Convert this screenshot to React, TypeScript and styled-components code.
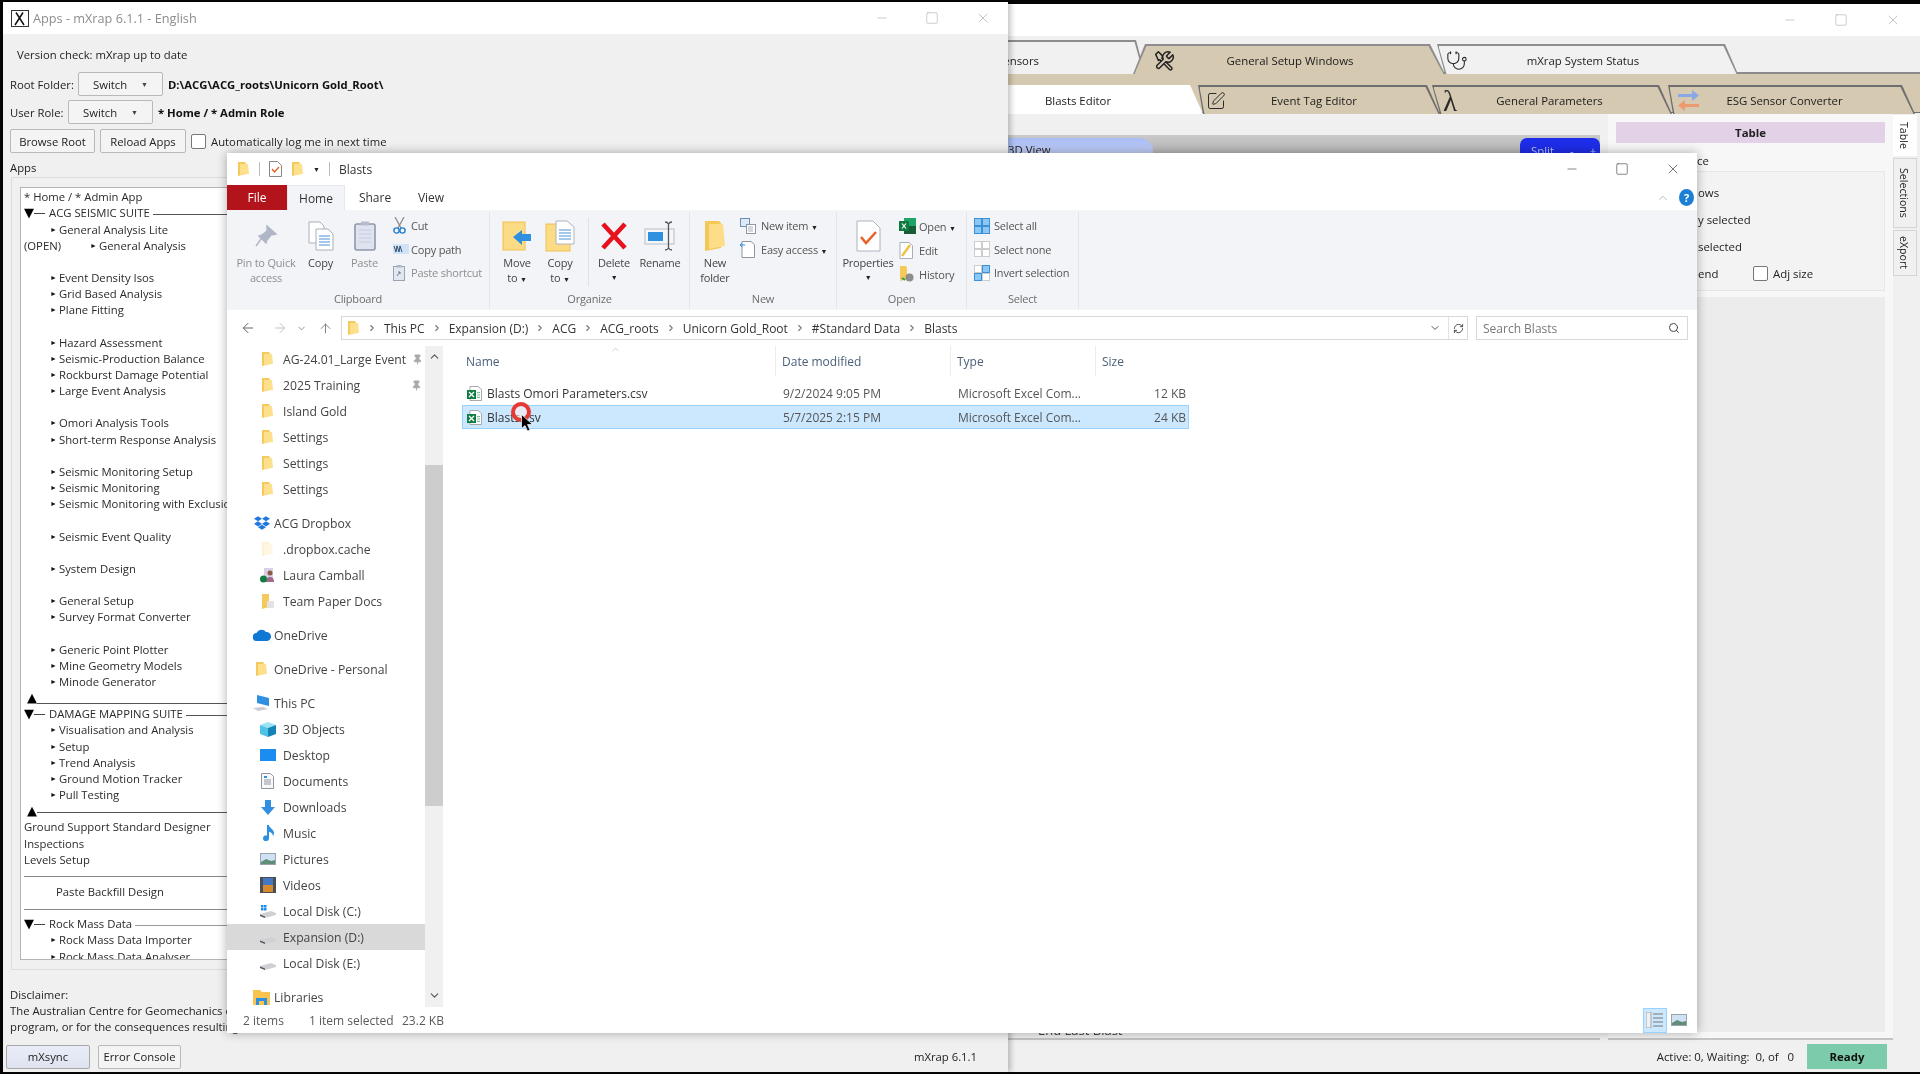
import React, { ReactElement, ReactNode } from 'react'
import styled, { createGlobalStyle } from 'styled-components'
import { FaDropbox } from 'react-icons/fa'
import { ArrowLeft, ArrowRight, ArrowUp, ChevronDown, ChevronRight, ChevronUp, Minus, Pin, RefreshCw, Search, Square, SquarePen, Stethoscope, X } from 'lucide-react'

const GlobalStyle = createGlobalStyle`
  html, body { margin: 0; padding: 0; background: #000; }
  body { font-family: "Open Sans", "Noto Sans", sans-serif; font-size: 11.4px; color: #222; }
  * { box-sizing: border-box; }
`

const Desktop = styled.div`
  position: relative;
  width: 1920px;
  height: 1074px;
  overflow: hidden;
  background: #050505;
  filter: blur(0.3px);
`

const Controls = styled.div<{ $gap: number; $color: string }>`
  display: flex;
  align-items: center;
  gap: ${p => p.$gap}px;
  color: ${p => p.$color};
  margin-left: auto;
`

/* ---------- back window (mXrap main) ---------- */

const BackWindow = styled.section`
  position: absolute;
  left: 1000px;
  top: 4px;
  width: 920px;
  height: 1068px;
  background: #f0f0f0;
  display: flex;
  flex-direction: column;
`

const BackTitle = styled.div`
  height: 32px;
  flex: none;
  background: #fff;
  display: flex;
  align-items: center;
  padding-right: 19px;
`

const TopTabs = styled.div`
  height: 38px;
  flex: none;
  display: flex;
  align-items: flex-end;
  border-bottom: 2px solid #8b8b8b;
`

const SubTabs = styled.div`
  height: 39px;
  flex: none;
  display: flex;
  align-items: flex-end;
  background: #d5c9b1;
  border-bottom: 1px solid #6e6e6e;
`

interface TabShape {
  $w: number
  $h: number
  $tl: number
  $tr: number
  $bl: number
  $fill: string
  $line: string
  $lap: number
  $pl: number
  $pr: number
  $drop?: number
}

const Tab = styled.div<TabShape>`
  position: relative;
  flex: none;
  width: ${p => p.$w}px;
  height: ${p => p.$h}px;
  margin-left: -${p => p.$lap}px;
  margin-bottom: -2px;
  padding: ${p => p.$drop || 0}px ${p => p.$pr}px 0 ${p => p.$pl}px;
  display: flex;
  align-items: center;
  background: ${p => p.$line};
  clip-path: polygon(${p => p.$tl}px 0, calc(100% - ${p => p.$tr}px) 0, 100% 100%, ${p => p.$bl}px 100%);
  &::before {
    content: '';
    position: absolute;
    inset: 2px 1.5px 0 1.5px;
    background: ${p => p.$fill};
    clip-path: polygon(${p => p.$tl}px 0, calc(100% - ${p => p.$tr}px) 0, 100% 100%, ${p => p.$bl}px 100%);
  }
`

const TabIcon = styled.span`
  position: relative;
  display: flex;
  align-items: center;
  flex: none;
  color: #2a2a2a;
`

const TabLabel = styled.span<{ $align?: string }>`
  position: relative;
  flex: 1;
  text-align: ${p => p.$align || 'center'};
  color: #1c1c1c;
  white-space: nowrap;
`

const Lambda = styled.span`
  font-family: "Liberation Serif", serif;
  font-size: 29px;
  line-height: 26px;
`

const BackBody = styled.div`
  flex: 1;
  min-height: 0;
  display: flex;
`

const StagePane = styled.div`
  width: 600px;
  flex: none;
  display: flex;
  flex-direction: column;
  padding-top: 22px;
  border-bottom: 2px solid #c4c4c4;
`

const ViewBar = styled.div`
  height: 40px;
  display: flex;
  align-items: flex-start;
  padding: 3px 0 0;
  background: linear-gradient(#c9c9c9, #9f9f9f);
`

const ViewTab = styled.div`
  width: 153px;
  height: 24px;
  padding: 4px 0 0 8px;
  border-radius: 0 14px 0 0;
  background: linear-gradient(#a9bcf5, #cfdaf8);
`

const SplitButton = styled.div`
  margin-left: auto;
  width: 80px;
  height: 24px;
  border-radius: 7px 7px 0 0;
  background: #1d2de8;
  color: #b9c3f5;
  display: flex;
  align-items: center;
  padding-left: 11px;
  gap: 16px;
`

const StageLegend = styled.div`
  margin-top: auto;
  height: 14px;
  display: flex;
  align-items: center;
  padding-left: 22px;
  gap: 9px;
  font-size: 13px;
  color: #444;
  margin-bottom: 1px;
`

const LegendDot = styled.span`
  width: 7px;
  height: 3px;
  background: #c239b3;
`

const SidePane = styled.div`
  width: 285px;
  flex: none;
  margin-left: 8px;
  background: #f7f7f7;
  border-bottom: 2px solid #c4c4c4;
  padding: 9px 8px 6px 8px;
  display: flex;
  flex-direction: column;
`

const SideHeader = styled.div`
  height: 21px;
  background: #e3d1e8;
  font-weight: 700;
  text-align: center;
  line-height: 21px;
  color: #222;
`

const SideNote = styled.div`
  padding-left: 81px;
  margin-top: 9px;
  height: 19px;
  line-height: 18px;
`

const SideGroup = styled.div`
  height: 120px;
  flex: none;
  margin-left: 4px;
  background: #f3f3f3;
  border: 1px solid #e6e6e6;
  padding: 7px 0 0 77px;
  display: grid;
  grid-auto-rows: 26.9px;
  align-items: center;
`

const SideRow = styled.div`
  display: flex;
  align-items: center;
  gap: 5px;
`

const EndLabel = styled.span`
  width: 50px;
`

const SideFill = styled.div`
  flex: 1;
  margin-top: 6px;
  margin-left: 4px;
  background: #ececec;
`

const SideTabs = styled.div`
  flex: 1;
  padding-top: 2px;
  display: flex;
  flex-direction: column;
  gap: 2px;
`

const SideTab = styled.div<{ $h: number; $on?: boolean }>`
  width: 24px;
  height: ${p => p.$h}px;
  writing-mode: vertical-rl;
  text-align: center;
  line-height: 24px;
  font-size: 10.6px;
  background: ${p => (p.$on ? '#fff' : '#f0f0f0')};
  border: 1px solid ${p => (p.$on ? '#fff' : '#d5d5d5')};
`

const BackFooter = styled.div`
  height: 32px;
  flex: none;
  display: flex;
  align-items: center;
  padding-right: 33px;
`

const StatusText = styled.span`
  margin-left: auto;
  margin-right: 13px;
  white-space: pre;
  color: #222;
`

const ReadyBadge = styled.div`
  width: 80px;
  height: 25px;
  background: #7ccbaa;
  font-weight: 700;
  text-align: center;
  line-height: 25px;
  color: #111;
`

/* ---------- apps window ---------- */

const AppsWindow = styled.section`
  position: absolute;
  left: 3px;
  top: 2px;
  width: 1005px;
  height: 1070px;
  background: #f0f0f0;
  box-shadow: 3px 0 5px rgba(0, 0, 0, 0.22);
  display: flex;
  flex-direction: column;
  font-size: 11.3px;
`

const AppsTitle = styled.div`
  height: 32px;
  flex: none;
  background: #fff;
  display: flex;
  align-items: center;
  padding: 0 17px 0 8px;
  color: #8d8d8d;
  font-size: 12.7px;
  gap: 4px;
`

const AppsBody = styled.div`
  flex: 1;
  padding: 13px 7px 0 7px;
  display: flex;
  flex-direction: column;
  min-height: 0;
`

const VersionLine = styled.div`
  height: 16px;
  line-height: 16px;
  padding-left: 7px;
`

const ToolRow = styled.div<{ $top: number }>`
  margin-top: ${p => p.$top}px;
  display: flex;
  align-items: center;
  gap: 5px;
  white-space: nowrap;
`

const FieldName = styled.span<{ $w: number }>`
  width: ${p => p.$w}px;
  flex: none;
`

const PushButton = styled.div<{ $w: number }>`
  width: ${p => p.$w}px;
  height: 24px;
  flex: none;
  background: #f4f4f4;
  border: 1px solid #b9b9b9;
  border-radius: 2px;
  display: flex;
  align-items: center;
  justify-content: center;
  gap: 14px;
`

const Caret = styled.span`
  font-size: 7px;
  color: #444;
`

const CheckBox = styled.span`
  width: 15px;
  height: 15px;
  flex: none;
  background: #fff;
  border: 1px solid #777;
  border-radius: 2px;
`

const Strong = styled.b`
  font-weight: 700;
  color: #111;
`

const AppsLabel = styled.div`
  margin-top: 7px;
  height: 16px;
  line-height: 16px;
`

const AppsGroup = styled.div`
  margin-top: 1px;
  height: 793px;
  flex: none;
  border: 1px solid #dcdcdc;
  padding: 9px 8px;
  margin-left: 1px;
`

const TreeBox = styled.div`
  height: 773px;
  background: #fff;
  border: 1px solid #b4b4b4;
  padding: 1.2px 3px 0;
  overflow: hidden;
`

const TreeRow = styled.div<{ $indent?: number }>`
  height: 16.17px;
  line-height: 16px;
  white-space: nowrap;
  display: flex;
  align-items: center;
  padding-left: ${p => p.$indent || 0}px;
  color: #2a2a2a;
`

const Bullet = styled.span`
  font-size: 7px;
  width: 9px;
  flex: none;
  color: #111;
`

const OpenTag = styled.span`
  width: 66px;
  flex: none;
`

const Fold = styled.span`
  font-family: "DejaVu Sans", sans-serif;
  font-size: 13px;
  width: 10px;
  flex: none;
  color: #000;
  line-height: 12px;
`

const RuleLine = styled.span<{ $gap?: number; $c?: string; $low?: boolean }>`
  flex: 1;
  height: 1px;
  background: ${p => p.$c || '#555'};
  margin-left: ${p => p.$gap || 0}px;
  transform: translateY(${p => (p.$low ? 5 : 1)}px);
`

const ShortRule = styled.span`
  width: 11px;
  height: 1px;
  margin: 0 4px 0 0;
  background: #444;
  flex: none;
`

const Disclaimer = styled.div`
  margin-top: 17px;
  line-height: 16px;
  white-space: nowrap;
  overflow: hidden;
`

const AppsFooter = styled.div`
  margin-top: 10px;
  display: flex;
  align-items: center;
  gap: 8px;
  height: 23px;
  margin-left: -4px;
  padding-right: 24px;
`

const SyncButton = styled(PushButton)`
  background: linear-gradient(#e9edf8, #dfe3f0);
  border-color: #a9a9a9;
`

const VersionTag = styled.span`
  margin-left: auto;
`

/* ---------- explorer window ---------- */

const Explorer = styled.section`
  position: absolute;
  left: 227px;
  top: 153px;
  width: 1470px;
  height: 880px;
  background: #fff;
  box-shadow: 0 0 10px rgba(0, 0, 0, 0.32);
  display: flex;
  flex-direction: column;
  font-size: 12px;
`

const QuickBar = styled.div`
  height: 32px;
  flex: none;
  display: flex;
  align-items: center;
  padding: 0 16px 0 10px;
  gap: 9px;
  color: #333;
`

const QuickRule = styled.span`
  width: 1px;
  height: 14px;
  background: #bbb;
`

const RibbonTabs = styled.div`
  height: 25px;
  flex: none;
  display: flex;
  align-items: stretch;
  position: relative;
`

const FileTab = styled.div`
  width: 60px;
  background: #b3141b;
  color: #fff;
  text-align: center;
  line-height: 25px;
`

const HomeTab = styled.div`
  width: 58px;
  background: #f2f4f8;
  border: 1px solid #e6e8ec;
  border-bottom: 0;
  text-align: center;
  line-height: 25px;
  color: #333;
`

const PlainTab = styled.div<{ $w: number }>`
  width: ${p => p.$w}px;
  text-align: center;
  line-height: 25px;
  color: #333;
`

const HelpArea = styled.div`
  margin-left: auto;
  display: flex;
  align-items: center;
  gap: 9px;
  padding: 0 3px 0 0;
  color: #8f8f8f;
`

const HelpDot = styled.span`
  width: 15px;
  height: 17px;
  border-radius: 50%;
  background: #1b7fd6;
  color: #fff;
  font-weight: 700;
  font-size: 11px;
  line-height: 17px;
  text-align: center;
`

const Ribbon = styled.div`
  height: 100px;
  flex: none;
  display: flex;
  background: #f2f4f8;
  font-size: 11px;
  letter-spacing: -0.2px;
`

const RibbonGroup = styled.div<{ $w: number }>`
  width: ${p => p.$w}px;
  flex: none;
  display: flex;
  flex-direction: column;
  border-right: 1px solid #e3e5e9;
  margin: 2px 0 1px;
`

const GroupBody = styled.div<{ $pad?: number }>`
  height: 79px;
  display: flex;
  padding-left: ${p => p.$pad || 0}px;
`

const GroupLabel = styled.div`
  height: 16px;
  text-align: center;
  line-height: 16px;
  color: #6d6d6d;
`

const BigButton = styled.div<{ $w: number; $muted?: boolean }>`
  width: ${p => p.$w}px;
  flex: none;
  display: flex;
  flex-direction: column;
  align-items: center;
  text-align: center;
  padding-top: 6px;
  line-height: 15px;
  white-space: nowrap;
  color: ${p => (p.$muted ? '#8e8e8e' : '#444')};
`

const BigIcon = styled.div`
  height: 36px;
  margin-bottom: 1px;
  display: flex;
  align-items: center;
  justify-content: center;
`

const TinyCaret = styled.span`
  font-size: 7px;
  color: #222;
`

const RibbonRule = styled.span`
  width: 1px;
  height: 68px;
  margin: 6px 0 0 12px;
  background: #dfe1e5;
`

const SmallColumn = styled.div<{ $step?: number }>`
  padding-top: 2px;
  display: grid;
  grid-auto-rows: ${p => p.$step || 23.5}px;
`

const SmallRow = styled.div<{ $slot: number; $muted?: boolean }>`
  display: grid;
  grid-template-columns: ${p => p.$slot}px auto;
  align-items: center;
  white-space: nowrap;
  color: ${p => (p.$muted ? '#8e8e8e' : '#555')};
`

const AddressRow = styled.div`
  height: 36px;
  flex: none;
  display: flex;
  align-items: center;
  padding: 0 9px 0 13px;
  color: #888;
`

const NavArrow = styled.span<{ $w: number; $c?: string }>`
  width: ${p => p.$w}px;
  display: flex;
  color: ${p => p.$c || '#666'};
`

const AddressBox = styled.div`
  width: 1127px;
  height: 24px;
  margin-left: 3px;
  border: 1px solid #d9d9d9;
  display: flex;
  align-items: center;
  padding-left: 5px;
  gap: 7px;
  color: #333;
  white-space: nowrap;
`

const Crumb = styled.span`
  display: flex;
  color: #777;
`

const AddressEnd = styled.span`
  margin-left: auto;
  display: flex;
  height: 100%;
  align-items: center;
  gap: 4px;
`

const AddressDrop = styled.span`
  width: 18px;
  height: 100%;
  display: flex;
  align-items: center;
  justify-content: center;
  color: #555;
`

const RefreshSlot = styled.span`
  width: 19px;
  height: 100%;
  display: flex;
  align-items: center;
  justify-content: center;
  border-left: 1px solid #e2e2e2;
  color: #444;
`

const SearchBox = styled.div`
  width: 212px;
  height: 24px;
  margin-left: 8px;
  border: 1px solid #d9d9d9;
  display: flex;
  align-items: center;
  padding: 0 7px 0 6px;
  color: #777;
  justify-content: space-between;
`

const MainSplit = styled.div`
  flex: 1;
  min-height: 0;
  display: flex;
`

const NavPane = styled.div`
  width: 198px;
  flex: none;
  overflow: hidden;
`

const NavRow = styled.div<{ $top?: boolean; $on?: boolean }>`
  height: 26px;
  margin-top: ${p => (p.$top ? 8 : 0)}px;
  padding-left: ${p => (p.$top ? 25 : 31)}px;
  display: flex;
  align-items: center;
  gap: ${p => (p.$top ? 3 : 6)}px;
  white-space: nowrap;
  color: #444;
  background: ${p => (p.$on ? '#d9d9d9' : 'transparent')};
  font-size: 12.2px;
`

const NavIcon = styled.span`
  width: 19px;
  height: 19px;
  flex: none;
  display: flex;
  align-items: center;
  justify-content: center;
`

const PinMark = styled.span`
  margin-left: auto;
  padding-right: 3px;
  color: #a9a9a9;
  display: flex;
`

const ScrollTrack = styled.div`
  width: 18px;
  flex: none;
  background: #f0f0f0;
  display: flex;
  flex-direction: column;
  align-items: center;
  color: #555;
  padding: 4px 0 1px;
`

const ScrollThumb = styled.div`
  width: 100%;
  height: 341px;
  margin-top: 102px;
  background: #cdcdcd;
`

const ScrollDown = styled.span`
  margin-top: auto;
`

const FilePane = styled.div`
  flex: 1;
  padding-left: 19px;
  position: relative;
`

const FileGrid = styled.div<{ $h: number; $on?: boolean }>`
  width: 727px;
  height: ${p => p.$h}px;
  display: grid;
  grid-template-columns: 320px 175px 145px 87px;
  align-items: center;
  background: ${p => (p.$on ? '#cce8ff' : 'transparent')};
  border: 1px solid ${p => (p.$on ? '#99d1ff' : 'transparent')};
  color: #555;
  white-space: nowrap;
`

const HeadGrid = styled(FileGrid)`
  border: 0;
  color: #4c607a;
  margin-bottom: 6px;
`

const HeadCell = styled.div<{ $pad?: number }>`
  height: 100%;
  padding-left: ${p => p.$pad || 0}px;
  display: flex;
  align-items: center;
  position: relative;
  &::before {
    content: '';
    position: absolute;
    left: -7px;
    top: 0;
    bottom: 0;
    width: 1px;
    background: ${p => (p.$pad ? 'transparent' : '#ececec')};
  }
`

const SortMark = styled.span`
  position: absolute;
  left: 148px;
  top: -2px;
  color: #999;
  display: flex;
`

const NameCell = styled.div`
  display: flex;
  align-items: center;
  gap: 5px;
  padding-left: 4px;
  color: #333;
`

const SizeCell = styled.div`
  text-align: right;
  padding-right: 4px;
`

const StatusBar = styled.div`
  height: 26px;
  flex: none;
  display: flex;
  align-items: center;
  padding: 0 9px 0 16px;
  color: #5a5a5a;
  white-space: nowrap;
`

const StatusItem = styled.span<{ $w: number }>`
  width: ${p => p.$w}px;
`

const ViewSwitch = styled.div<{ $on?: boolean }>`
  width: ${p => (p.$on ? 24 : 18)}px;
  height: 25px;
  margin-left: ${p => (p.$on ? 'auto' : '3px')};
  background: ${p => (p.$on ? '#cce8ff' : 'transparent')};
  border: 1px solid ${p => (p.$on ? '#99d1ff' : 'transparent')};
  display: flex;
  align-items: center;
  justify-content: center;
`

const ClickRing = styled.span`
  position: absolute;
  left: 68px;
  top: 56px;
  width: 20px;
  height: 20px;
  border-radius: 50%;
  border: 4px solid #e43a33;
  background: rgba(255, 235, 235, 0.55);
  filter: blur(0.6px);
`

const Pointer = styled.svg`
  position: absolute;
  left: 78px;
  top: 68px;
`

/* ---------- drawings ---------- */

const Folder = ({ faded }: { faded?: boolean }): ReactElement => (
  <svg width="13" height="16" viewBox="0 0 13 16">
    <path d="M1 1h7l1 1.5V13l-8 2z" fill={faded ? '#fdf2d2' : '#f6c95d'} />
    <path d="M3 3h8l1 10-9 1z" fill={faded ? '#fff7e2' : '#fddf8c'} />
  </svg>
)

const BigFolder = (): ReactElement => (
  <svg width="22" height="32" viewBox="0 0 22 32">
    <path d="M1 1h14l2 2v25L1 31z" fill="#f5c757" />
    <path d="M5 4h14l2 22-16 3z" fill="#fddd88" />
  </svg>
)

const ExcelFile = (): ReactElement => (
  <svg width="15" height="15" viewBox="0 0 15 15">
    <path d="M3 .5h8l3.500 3v11H3z" fill="#fff" stroke="#a9a9a9" />
    <path d="M10 6h3v1.2h-3zm0 2.4h3v1.2h-3zm0 2.4h3V12h-3z" fill="#7fbf9f" />
    <rect y="4" width="9" height="9" fill="#107c41" />
    <path d="M2 6l5 5M7 6l-5 5" stroke="#fff" strokeWidth="1.3" />
  </svg>
)

const PageLines = ({ w, h }: { w: number; h: number }): ReactElement => (
  <svg width={w} height={h} viewBox="0 0 26 30">
    <path d="M1 1h11l4 4v17H1z" fill="#fff" stroke="#a9aeb8" />
    <path d="M8 8h12l5 5v16H8z" fill="#fff" stroke="#a9aeb8" />
    <path d="M11 15h11M11 18h11M11 21h11M11 24h11" stroke="#4a90d9" strokeWidth="1.2" />
  </svg>
)

const Clipboard = (): ReactElement => (
  <svg width="22" height="30" viewBox="0 0 22 30">
    <rect x="1" y="3" width="20" height="26" rx="2" fill="#dfe3ef" stroke="#8f97ad" strokeWidth="1.6" />
    <rect x="7" y="0.5" width="8" height="4" fill="#b6bccb" />
    <path d="M5 9h12M5 13h12M5 17h12M5 21h12" stroke="#c7cde0" />
  </svg>
)

const QuickPin = (): ReactElement => (
  <svg width="24" height="24" viewBox="0 0 24 24">
    <path d="M13 2l9 8-5 1-4 5-1 3-7-7 3-1 5-4z M7 15l-5 7" fill="#b0b6c6" stroke="#b0b6c6" strokeWidth="1.4" />
  </svg>
)

const Scissors = (): ReactElement => (
  <svg width="13" height="17" viewBox="0 0 13 17">
    <path d="M2 0l6 11M11 0L5 11" stroke="#8b8b8b" strokeWidth="1.3" />
    <circle cx="3.5" cy="13.5" r="2.6" fill="none" stroke="#1f7fd0" strokeWidth="1.4" />
    <circle cx="9.5" cy="13.5" r="2.6" fill="none" stroke="#1f7fd0" strokeWidth="1.4" />
  </svg>
)

const PathBadge = (): ReactElement => (
  <svg width="16" height="10" viewBox="0 0 16 10">
    <rect width="16" height="10" fill="#cfe2f6" />
    <path d="M1 2l2 6 1-6 2 6 1-6 2 6" stroke="#22405f" fill="none" strokeWidth="0.9" />
  </svg>
)

const ShortcutDoc = (): ReactElement => (
  <svg width="12" height="16" viewBox="0 0 12 16">
    <rect x="0.5" y="1.5" width="11" height="14" fill="#e3e7f0" stroke="#9aa2b5" />
    <rect x="3.5" y="0" width="5" height="2.5" fill="#b0b6c6" />
    <path d="M4 11l3-4m-2 0h2v2" stroke="#6a7a95" fill="none" />
  </svg>
)

const MoveArrow = (): ReactElement => (
  <svg width="30" height="30" viewBox="0 0 30 30">
    <rect x="1" y="1" width="22" height="28" fill="#fcdb85" stroke="#f0c050" />
    <path d="M11 16l9-7v4h9v7h-9v4z" fill="#2f8fe0" />
  </svg>
)

const CopyFolder = (): ReactElement => (
  <svg width="30" height="32" viewBox="0 0 30 32">
    <rect x="1" y="4" width="24" height="27" fill="#fcdb85" stroke="#f0c050" />
    <path d="M11 1h11l7 6v17H11z" fill="#fff" stroke="#b0b5c0" />
    <path d="M14 10h12M14 13h12M14 16h12M14 19h12" stroke="#4a90d9" />
  </svg>
)

const RedCross = (): ReactElement => (
  <svg width="28" height="28" viewBox="0 0 28 28">
    <path d="M3 2l22 24M25 2L3 26" stroke="#e8121c" strokeWidth="4.6" />
  </svg>
)

const RenameMark = (): ReactElement => (
  <svg width="32" height="30" viewBox="0 0 32 30">
    <rect x="1" y="8" width="29" height="15" fill="#f4f6fa" stroke="#b8bcc6" />
    <rect x="4" y="11" width="15" height="9" fill="#2f8fe0" />
    <path d="M21 1c2 0 3 1 3.500 2C25 2 26 1 28 1M24.500 3v24M21 29c2 0 3-1 3.500-2 .5 1 1.500 2 3.500 2" stroke="#55585f" fill="none" strokeWidth="1.3" />
  </svg>
)

const NewItem = (): ReactElement => (
  <svg width="16" height="16" viewBox="0 0 16 16">
    <rect x="0.5" y="0.5" width="9" height="8" fill="#dbe9f8" stroke="#6f8db0" />
    <rect x="6.5" y="6.5" width="9" height="9" fill="#fff" stroke="#8f96a3" />
    <path d="M8 9h5M8 11h5M8 13h5" stroke="#aab0bb" />
  </svg>
)

const EasyAccess = (): ReactElement => (
  <svg width="15" height="17" viewBox="0 0 15 17">
    <path d="M2 .5h9l3.500 3v13H2z" fill="#fff" stroke="#8f96a3" />
    <path d="M0 4h5M2 2l-2 2 2 2" stroke="#2f8fe0" fill="none" />
  </svg>
)

const Properties = (): ReactElement => (
  <svg width="25" height="32" viewBox="0 0 25 32">
    <path d="M1 1h16l7 7v23H1z" fill="#fff" stroke="#aeb2ba" />
    <path d="M5 17l5 6 10-11" stroke="#e8622a" fill="none" strokeWidth="2.6" />
  </svg>
)

const ExcelApp = (): ReactElement => (
  <svg width="17" height="16" viewBox="0 0 17 16">
    <rect x="5" width="12" height="16" fill="#21a366" />
    <rect x="5" y="8" width="12" height="8" fill="#185c37" />
    <rect y="3" width="10" height="10" fill="#0f7b41" />
    <path d="M3 5.5l4 5M7 5.5l-4 5" stroke="#fff" strokeWidth="1.2" />
  </svg>
)

const EditPage = (): ReactElement => (
  <svg width="15" height="17" viewBox="0 0 15 17">
    <path d="M1 .5h9l3.500 3v13H1z" fill="#fff" stroke="#a9aeb8" />
    <path d="M3 14L11 3" stroke="#f0c040" strokeWidth="2.4" />
  </svg>
)

const HistoryFolder = (): ReactElement => (
  <svg width="15" height="16" viewBox="0 0 15 16">
    <path d="M1 0h6l1 1.500V13l-7 2z" fill="#f6c95d" />
    <circle cx="10.5" cy="11.5" r="4" fill="#8d8d8d" />
    <path d="M3 12l3 2" stroke="#3a9a4a" strokeWidth="2" />
  </svg>
)

const Tiles = ({ cells, line }: { cells: boolean[]; line: string }): ReactElement => (
  <svg width="16" height="16" viewBox="0 0 16 16">
    {cells.map((on, i) => (
      <rect
        key={i}
        x={0.5 + (i % 2) * 8}
        y={0.5 + Math.floor(i / 2) * 8}
        width="7"
        height="7"
        fill={on ? '#8cc8f5' : '#fff'}
        stroke={on ? '#3d8fd6' : line}
      />
    ))}
  </svg>
)

const Doc = (): ReactElement => (
  <svg width="13" height="16" viewBox="0 0 13 16">
    <path d="M.5.5h9l3 3v12H.5z" fill="#f8f8f8" stroke="#8f96a3" />
    <path d="M3 7h7M3 9h7M3 11h7" stroke="#8f96a3" />
    <path d="M3 3h3v2H3z" fill="#2f8fe0" />
  </svg>
)

const Monitor = (): ReactElement => (
  <svg width="17" height="16" viewBox="0 0 17 16">
    <path d="M4 0l12 3v8L4 8z" fill="#2f8fe0" />
    <path d="M0 13l10-1 5 2-10 2z" fill="#c8ccd2" />
  </svg>
)

const Cube = (): ReactElement => (
  <svg width="16" height="15" viewBox="0 0 16 15">
    <path d="M8 0l8 3-8 3-8-3z" fill="#9be3f3" />
    <path d="M0 3l8 3v9l-8-3z" fill="#4fc3e6" />
    <path d="M16 3L8 6v9l8-3z" fill="#1483b8" />
  </svg>
)

const DesktopIcon = (): ReactElement => (
  <svg width="16" height="12" viewBox="0 0 16 12">
    <rect width="16" height="12" fill="#1b8df0" />
  </svg>
)

const DownArrow = (): ReactElement => (
  <svg width="14" height="15" viewBox="0 0 14 15">
    <path d="M4 0h6v7h4l-7 8-7-8h4z" fill="#2f8fe0" />
  </svg>
)

const Note = (): ReactElement => (
  <svg width="12" height="16" viewBox="0 0 12 16">
    <path d="M5 0h2c0 3 5 4 5 8 0 2-1 3-1 3 0-2-2-4-4-4v6a3 3 0 1 1-2-2.500z" fill="#2f8fe0" />
  </svg>
)

const Picture = (): ReactElement => (
  <svg width="16" height="12" viewBox="0 0 16 12">
    <rect x="0.5" y="0.5" width="15" height="11" fill="#cfe2f3" stroke="#9ba3ad" />
    <path d="M1 9l5-3 5 2 4-1v4H1z" fill="#5f8d7a" />
  </svg>
)

const Film = (): ReactElement => (
  <svg width="16" height="16" viewBox="0 0 16 16">
    <rect width="16" height="16" fill="#4a4f55" />
    <rect x="3" y="1" width="10" height="7" fill="#4477c4" />
    <rect x="3" y="8" width="10" height="7" fill="#d68a2c" />
  </svg>
)

const Disk = ({ win }: { win?: boolean }): ReactElement => (
  <svg width="16" height="14" viewBox="0 0 16 14">
    <path d="M0 10l11-3 5 2v2L5 14l-5-2z" fill="#cfd1d4" />
    <path d="M0 10.5l5 2V14l-5-2z" fill="#555" />
    {win && <path d="M1 1h2.500v2.500H1zm3 0h2.500v2.500H4zM1 4h2.500v2.500H1zm3 0h2.500v2.500H4z" fill="#1b8df0" />}
  </svg>
)

const LibraryIcon = (): ReactElement => (
  <svg width="17" height="15" viewBox="0 0 17 15">
    <path d="M0 0h7l2 2h8v13H0z" fill="#f8c34e" />
    <rect x="3" y="8" width="11" height="7" fill="#2f8fe0" />
    <rect x="6" y="11" width="5" height="4" fill="#f8c34e" />
  </svg>
)

const SmallCloud = (): ReactElement => (
  <svg width="18" height="12" viewBox="0 0 18 12">
    <path d="M4 12a4 4 0 0 1-.5-8A5.500 5.500 0 0 1 13 3a4.500 4.500 0 0 1 1 9z" fill="#0f78d4" />
  </svg>
)

const PersonFolder = (): ReactElement => (
  <svg width="16" height="15" viewBox="0 0 16 15">
    <rect x="4" width="9" height="12" fill="#d9cfe8" />
    <circle cx="10" cy="5" r="2.5" fill="#8a5a44" />
    <path d="M6 14c0-4 2-5 4-5s4 1 4 5z" fill="#a06a8c" />
    <circle cx="3.5" cy="11" r="3.5" fill="#107c41" />
  </svg>
)

const TeamFolder = (): ReactElement => (
  <svg width="14" height="16" viewBox="0 0 14 16">
    <path d="M1 1h7v13l-7 2z" fill="#f6c95d" />
    <rect x="6" y="8" width="7" height="7" fill="#e3e3e3" />
  </svg>
)

const AppLogo = (): ReactElement => (
  <svg width="18" height="17" viewBox="0 0 18 17">
    <rect x="0.5" y="0.5" width="17" height="16" fill="#fff" stroke="#333" />
    <path d="M5 2.500l8 12.500M12 2.500L4 15" stroke="#111" strokeWidth="1.5" />
  </svg>
)

const Tools = (): ReactElement => (
  <svg width="21" height="21" viewBox="0 0 24 24" fill="#d5c9b1" stroke="#222" strokeWidth="1.7" strokeLinejoin="round">
    <path d="M2 5l3-3 5 5-1 2 11 11c.8.8.8 1.600 0 2.300-.7.7-1.500.7-2.300 0L6.800 11.200 5 12z" />
    <path d="M14.700 6.300a1 1 0 0 0 0 1.400l1.600 1.600a1 1 0 0 0 1.400 0l3.770-3.770a6 6 0 0 1-7.940 7.940l-6.910 6.910a2.120 2.120 0 0 1-3-3l6.910-6.910a6 6 0 0 1 7.940-7.940l-3.760 3.760z" />
  </svg>
)

const SwapArrows = (): ReactElement => (
  <svg width="21" height="21" viewBox="0 0 21 21">
    <path d="M0 4h14V0l7 5.500-7 5.500V7H0z" fill="#8aa8e8" />
    <path d="M21 14H7v-4L0 15.500 7 21v-4h14z" fill="#ec9a70" />
  </svg>
)

const DetailsView = (): ReactElement => (
  <svg width="18" height="16" viewBox="0 0 18 16">
    <path d="M0 0h5v16H0z" fill="#f0f0f0" stroke="#777" strokeWidth="0.6" />
    <path d="M7 2h10M7 6h10M7 10h10M7 14h10" stroke="#777" />
  </svg>
)

/* ---------- data ---------- */

type TreeEntry =
  | { kind: 'text'; label: string; indent?: number }
  | { kind: 'item'; label: string }
  | { kind: 'open'; label: string }
  | { kind: 'gap' }
  | { kind: 'suite'; label: string; line?: string }
  | { kind: 'end'; low?: boolean }
  | { kind: 'rule' }

const item = (label: string): TreeEntry => ({ kind: 'item', label })
const gap: TreeEntry = { kind: 'gap' }

const tree: TreeEntry[] = [
  { kind: 'text', label: '* Home / * Admin App' },
  { kind: 'suite', label: 'ACG SEISMIC SUITE' },
  item('General Analysis Lite'),
  { kind: 'open', label: 'General Analysis' },
  gap,
  item('Event Density Isos'),
  item('Grid Based Analysis'),
  item('Plane Fitting'),
  gap,
  item('Hazard Assessment'),
  item('Seismic-Production Balance'),
  item('Rockburst Damage Potential'),
  item('Large Event Analysis'),
  gap,
  item('Omori Analysis Tools'),
  item('Short-term Response Analysis'),
  gap,
  item('Seismic Monitoring Setup'),
  item('Seismic Monitoring'),
  item('Seismic Monitoring with Exclusions'),
  gap,
  item('Seismic Event Quality'),
  gap,
  item('System Design'),
  gap,
  item('General Setup'),
  item('Survey Format Converter'),
  gap,
  item('Generic Point Plotter'),
  item('Mine Geometry Models'),
  item('Minode Generator'),
  { kind: 'end', low: true },
  { kind: 'suite', label: 'DAMAGE MAPPING SUITE' },
  item('Visualisation and Analysis'),
  item('Setup'),
  item('Trend Analysis'),
  item('Ground Motion Tracker'),
  item('Pull Testing'),
  { kind: 'end' },
  { kind: 'text', label: 'Ground Support Standard Designer' },
  { kind: 'text', label: 'Inspections' },
  { kind: 'text', label: 'Levels Setup' },
  { kind: 'rule' },
  { kind: 'text', label: 'Paste Backfill Design', indent: 32 },
  { kind: 'rule' },
  { kind: 'suite', label: 'Rock Mass Data', line: '#999' },
  item('Rock Mass Data Importer'),
  item('Rock Mass Data Analyser'),
]

interface NavEntry {
  label: string
  icon: ReactNode
  top?: boolean
  on?: boolean
  pinned?: boolean
}

const navEntries: NavEntry[] = [
  { label: 'AG-24.01_Large Event', icon: <Folder />, pinned: true },
  { label: '2025 Training', icon: <Folder />, pinned: true },
  { label: 'Island Gold', icon: <Folder /> },
  { label: 'Settings', icon: <Folder /> },
  { label: 'Settings', icon: <Folder /> },
  { label: 'Settings', icon: <Folder /> },
  { label: 'ACG Dropbox', icon: <FaDropbox size={16} color="#1f78e0" />, top: true },
  { label: '.dropbox.cache', icon: <Folder faded /> },
  { label: 'Laura Camball', icon: <PersonFolder /> },
  { label: 'Team Paper Docs', icon: <TeamFolder /> },
  { label: 'OneDrive', icon: <SmallCloud />, top: true },
  { label: 'OneDrive - Personal', icon: <Folder />, top: true },
  { label: 'This PC', icon: <Monitor />, top: true },
  { label: '3D Objects', icon: <Cube /> },
  { label: 'Desktop', icon: <DesktopIcon /> },
  { label: 'Documents', icon: <Doc /> },
  { label: 'Downloads', icon: <DownArrow /> },
  { label: 'Music', icon: <Note /> },
  { label: 'Pictures', icon: <Picture /> },
  { label: 'Videos', icon: <Film /> },
  { label: 'Local Disk (C:)', icon: <Disk win /> },
  { label: 'Expansion (D:)', icon: <Disk />, on: true },
  { label: 'Local Disk (E:)', icon: <Disk /> },
  { label: 'Libraries', icon: <LibraryIcon />, top: true },
]

const crumbs = ['This PC', 'Expansion (D:)', 'ACG', 'ACG_roots', 'Unicorn Gold_Root', '#Standard Data', 'Blasts']

const renderTree = (entry: TreeEntry, i: number): ReactElement => {
  switch (entry.kind) {
    case 'text':
      return <TreeRow key={i} $indent={entry.indent}>{entry.label}</TreeRow>
    case 'item':
      return <TreeRow key={i} $indent={26}><Bullet>►</Bullet>{entry.label}</TreeRow>
    case 'open':
      return (
        <TreeRow key={i}>
          <OpenTag>(OPEN)</OpenTag>
          <Bullet>►</Bullet>
          {entry.label}
        </TreeRow>
      )
    case 'gap':
      return <TreeRow key={i} />
    case 'suite':
      return (
        <TreeRow key={i}>
          <Fold>▼</Fold>
          <ShortRule />
          {entry.label}
          <RuleLine $gap={3} $c={entry.line} />
        </TreeRow>
      )
    case 'end':
      return (
        <TreeRow key={i} $indent={3}>
          <Fold>▲</Fold>
          <RuleLine $low={entry.low} />
        </TreeRow>
      )
    default:
      return <TreeRow key={i}><RuleLine $c="#888" /></TreeRow>
  }
}

const WindowButtons = ({ color, gap: space, size }: { color: string; gap: number; size: number }): ReactElement => (
  <Controls $gap={space} $color={color}>
    <Minus size={size} strokeWidth={1} />
    <Square size={size} strokeWidth={1} />
    <X size={size + 2} strokeWidth={1} />
  </Controls>
)

const BackMxrap = (): ReactElement => (
  <BackWindow>
    <BackTitle>
      <WindowButtons color="#a8a8a8" gap={37} size={14} />
    </BackTitle>
    <TopTabs>
      <Tab $w={145} $h={34} $tl={0} $tr={9} $bl={0} $fill="#f1f1f1" $line="#8d8d8d" $lap={0} $pl={0} $pr={106} $drop={6}>
        <TabLabel $align="right">ensors</TabLabel>
      </Tab>
      <Tab $w={312} $h={30} $tl={12} $tr={15} $bl={0} $fill="#d5c9b1" $line="#8d8d8d" $lap={12} $pl={21} $pr={40} $drop={3}>
        <TabIcon><Tools /></TabIcon>
        <TabLabel>General Setup Windows</TabLabel>
      </Tab>
      <Tab $w={301} $h={30} $tl={0} $tr={13} $bl={8} $fill="#f1f1f1" $line="#8d8d8d" $lap={8} $pl={9} $pr={40} $drop={3}>
        <TabIcon><Stethoscope size={22} strokeWidth={1.2} /></TabIcon>
        <TabLabel>mXrap System Status</TabLabel>
      </Tab>
    </TopTabs>
    <SubTabs>
      <Tab $w={203} $h={29} $tl={0} $tr={13} $bl={0} $fill="#fff" $line="#fff" $lap={0} $pl={0} $pr={47} $drop={2}>
        <TabLabel>Blasts Editor</TabLabel>
      </Tab>
      <Tab $w={242} $h={29} $tl={0} $tr={13} $bl={5} $fill="#d5c9b1" $line="#6e6e6e" $lap={5} $pl={8} $pr={38} $drop={2}>
        <TabIcon><SquarePen size={20} strokeWidth={1.2} /></TabIcon>
        <TabLabel>Event Tag Editor</TabLabel>
      </Tab>
      <Tab $w={240} $h={29} $tl={0} $tr={13} $bl={8} $fill="#d5c9b1" $line="#6e6e6e" $lap={8} $pl={11} $pr={30} $drop={2}>
        <TabIcon><Lambda>λ</Lambda></TabIcon>
        <TabLabel>General Parameters</TabLabel>
      </Tab>
      <Tab $w={247} $h={29} $tl={0} $tr={13} $bl={5} $fill="#d5c9b1" $line="#6e6e6e" $lap={4} $pl={10} $pr={45} $drop={2}>
        <TabIcon><SwapArrows /></TabIcon>
        <TabLabel>ESG Sensor Converter</TabLabel>
      </Tab>
    </SubTabs>
    <BackBody>
      <StagePane>
        <ViewBar>
          <ViewTab>3D View</ViewTab>
          <SplitButton><span>Split</span><span>-</span><span>+</span></SplitButton>
        </ViewBar>
        <StageLegend><LegendDot />End Last Blast</StageLegend>
      </StagePane>
      <SidePane>
        <SideHeader>Table</SideHeader>
        <SideNote>ce</SideNote>
        <SideGroup>
          <SideRow>ows</SideRow>
          <SideRow>y selected</SideRow>
          <SideRow>selected</SideRow>
          <SideRow>
            <EndLabel>end</EndLabel>
            <CheckBox />
            Adj size
          </SideRow>
        </SideGroup>
        <SideFill />
      </SidePane>
      <SideTabs>
        <SideTab $h={41} $on>Table</SideTab>
        <SideTab $h={70}>Selections</SideTab>
        <SideTab $h={46}>eXport</SideTab>
      </SideTabs>
    </BackBody>
    <BackFooter>
      <StatusText>Active: 0, Waiting:  0, of   0</StatusText>
      <ReadyBadge>Ready</ReadyBadge>
    </BackFooter>
  </BackWindow>
)

const AppsPanel = (): ReactElement => (
  <AppsWindow>
    <AppsTitle>
      <AppLogo />
      Apps - mXrap 6.1.1 - English
      <WindowButtons color="#a8a8a8" gap={36} size={14} />
    </AppsTitle>
    <AppsBody>
      <VersionLine>Version check: mXrap up to date</VersionLine>
      <ToolRow $top={9}>
        <FieldName $w={63}>Root Folder:</FieldName>
        <PushButton $w={85}>Switch <Caret>▼</Caret></PushButton>
        <Strong>D:\ACG\ACG_roots\Unicorn Gold_Root\</Strong>
      </ToolRow>
      <ToolRow $top={4}>
        <FieldName $w={53}>User Role:</FieldName>
        <PushButton $w={85}>Switch <Caret>▼</Caret></PushButton>
        <Strong>* Home / * Admin Role</Strong>
      </ToolRow>
      <ToolRow $top={5}>
        <PushButton $w={85}>Browse Root</PushButton>
        <PushButton $w={86}>Reload Apps</PushButton>
        <CheckBox />
        Automatically log me in next time
      </ToolRow>
      <AppsLabel>Apps</AppsLabel>
      <AppsGroup>
        <TreeBox>{tree.map(renderTree)}</TreeBox>
      </AppsGroup>
      <Disclaimer>
        Disclaimer:
        <br />
        The Australian Centre for Geomechanics c
        <br />
        program, or for the consequences resulting
      </Disclaimer>
      <AppsFooter>
        <SyncButton $w={84}>mXsync</SyncButton>
        <PushButton $w={83}>Error Console</PushButton>
        <VersionTag>mXrap 6.1.1</VersionTag>
      </AppsFooter>
    </AppsBody>
  </AppsWindow>
)

const ExplorerWindow = (): ReactElement => (
  <Explorer>
    <QuickBar>
      <Folder />
      <QuickRule />
      <svg width="13" height="16" viewBox="0 0 13 16">
        <path d="M.5.5h8l4 4v11H.5z" fill="#fff" stroke="#888" />
        <path d="M3 8l2.500 3L10 6" stroke="#e8622a" fill="none" strokeWidth="1.4" />
      </svg>
      <Folder />
      <TinyCaret>▼</TinyCaret>
      <QuickRule />
      Blasts
      <WindowButtons color="#333" gap={36} size={14} />
    </QuickBar>
    <RibbonTabs>
      <FileTab>File</FileTab>
      <HomeTab>Home</HomeTab>
      <PlainTab $w={60}>Share</PlainTab>
      <PlainTab $w={52}>View</PlainTab>
      <HelpArea>
        <ChevronUp size={14} strokeWidth={1} />
        <HelpDot>?</HelpDot>
      </HelpArea>
    </RibbonTabs>
    <Ribbon>
      <RibbonGroup $w={263}>
        <GroupBody>
          <BigButton $w={78} $muted>
            <BigIcon><QuickPin /></BigIcon>
            <span>Pin to Quick<br />access</span>
          </BigButton>
          <BigButton $w={31}>
            <BigIcon><PageLines w={26} h={30} /></BigIcon>
            Copy
          </BigButton>
          <BigButton $w={57} $muted>
            <BigIcon><Clipboard /></BigIcon>
            Paste
          </BigButton>
          <SmallColumn>
            <SmallRow $slot={18}><Scissors />Cut</SmallRow>
            <SmallRow $slot={18}><PathBadge />Copy path</SmallRow>
            <SmallRow $slot={18} $muted><ShortcutDoc />Paste shortcut</SmallRow>
          </SmallColumn>
        </GroupBody>
        <GroupLabel>Clipboard</GroupLabel>
      </RibbonGroup>
      <RibbonGroup $w={200}>
        <GroupBody>
          <BigButton $w={54}>
            <BigIcon><MoveArrow /></BigIcon>
            Move
            <span>to <TinyCaret>▼</TinyCaret></span>
          </BigButton>
          <BigButton $w={32}>
            <BigIcon><CopyFolder /></BigIcon>
            Copy
            <span>to <TinyCaret>▼</TinyCaret></span>
          </BigButton>
          <RibbonRule />
          <BigButton $w={50}>
            <BigIcon><RedCross /></BigIcon>
            Delete
            <TinyCaret>▼</TinyCaret>
          </BigButton>
          <BigButton $w={42}>
            <BigIcon><RenameMark /></BigIcon>
            Rename
          </BigButton>
        </GroupBody>
        <GroupLabel>Organize</GroupLabel>
      </RibbonGroup>
      <RibbonGroup $w={147}>
        <GroupBody>
          <BigButton $w={50}>
            <BigIcon><BigFolder /></BigIcon>
            <span>New<br />folder</span>
          </BigButton>
          <SmallColumn>
            <SmallRow $slot={21}><NewItem /><span>New item <TinyCaret>▼</TinyCaret></span></SmallRow>
            <SmallRow $slot={21}><EasyAccess /><span>Easy access <TinyCaret>▼</TinyCaret></span></SmallRow>
          </SmallColumn>
        </GroupBody>
        <GroupLabel>New</GroupLabel>
      </RibbonGroup>
      <RibbonGroup $w={130}>
        <GroupBody>
          <BigButton $w={62}>
            <BigIcon><Properties /></BigIcon>
            Properties
            <TinyCaret>▼</TinyCaret>
          </BigButton>
          <SmallColumn $step={24}>
            <SmallRow $slot={20}><ExcelApp /><span>Open <TinyCaret>▼</TinyCaret></span></SmallRow>
            <SmallRow $slot={20}><EditPage />Edit</SmallRow>
            <SmallRow $slot={20}><HistoryFolder />History</SmallRow>
          </SmallColumn>
        </GroupBody>
        <GroupLabel>Open</GroupLabel>
      </RibbonGroup>
      <RibbonGroup $w={112}>
        <GroupBody $pad={7}>
          <SmallColumn>
            <SmallRow $slot={20}><Tiles cells={[true, true, true, true]} line="#ccc" />Select all</SmallRow>
            <SmallRow $slot={20}><Tiles cells={[false, false, false, false]} line="#ccc" />Select none</SmallRow>
            <SmallRow $slot={20}><Tiles cells={[false, true, true, false]} line="#ccc" />Invert selection</SmallRow>
          </SmallColumn>
        </GroupBody>
        <GroupLabel>Select</GroupLabel>
      </RibbonGroup>
    </Ribbon>
    <AddressRow>
      <NavArrow $w={32}><ArrowLeft size={16} strokeWidth={1.5} /></NavArrow>
      <NavArrow $w={24} $c="#c4c4c4"><ArrowRight size={16} strokeWidth={1.5} /></NavArrow>
      <NavArrow $w={22}><ChevronDown size={11} strokeWidth={1.5} /></NavArrow>
      <NavArrow $w={20}><ArrowUp size={15} strokeWidth={1.3} /></NavArrow>
      <AddressBox>
        <Folder />
        {crumbs.map(c => (
          <React.Fragment key={c}>
            <Crumb><ChevronRight size={10} strokeWidth={2.6} /></Crumb>
            <span>{c}</span>
          </React.Fragment>
        ))}
        <AddressEnd>
          <AddressDrop><ChevronDown size={12} /></AddressDrop>
          <RefreshSlot><RefreshCw size={11} /></RefreshSlot>
        </AddressEnd>
      </AddressBox>
      <SearchBox>
        Search Blasts
        <Search size={12} color="#444" />
      </SearchBox>
    </AddressRow>
    <MainSplit>
      <NavPane>
        {navEntries.map((n, i) => (
          <NavRow key={i} $top={n.top} $on={n.on}>
            <NavIcon>{n.icon}</NavIcon>
            {n.label}
            {n.pinned && <PinMark><Pin size={11} fill="#a9a9a9" /></PinMark>}
          </NavRow>
        ))}
      </NavPane>
      <ScrollTrack>
        <ChevronUp size={13} strokeWidth={2} />
        <ScrollThumb />
        <ScrollDown><ChevronDown size={13} strokeWidth={2} /></ScrollDown>
      </ScrollTrack>
      <FilePane>
        <HeadGrid $h={30}>
          <HeadCell $pad={4}>
            Name
            <SortMark><ChevronUp size={11} strokeWidth={1} /></SortMark>
          </HeadCell>
          <HeadCell>Date modified</HeadCell>
          <HeadCell>Type</HeadCell>
          <HeadCell>Size</HeadCell>
        </HeadGrid>
        <FileGrid $h={23}>
          <NameCell><ExcelFile />Blasts Omori Parameters.csv</NameCell>
          <span>9/2/2024 9:05 PM</span>
          <span>Microsoft Excel Com...</span>
          <SizeCell>12 KB</SizeCell>
        </FileGrid>
        <FileGrid $h={24} $on>
          <NameCell><ExcelFile />Blasts.csv</NameCell>
          <span>5/7/2025 2:15 PM</span>
          <span>Microsoft Excel Com...</span>
          <SizeCell>24 KB</SizeCell>
        </FileGrid>
        <ClickRing />
        <Pointer width="12" height="17" viewBox="0 0 12 17">
          <path d="M0.5 0.5v14l3.500-3 2.500 5.500 2.500-1-2.500-5.500h5z" fill="#000" stroke="#fff" strokeWidth="0.7" />
        </Pointer>
      </FilePane>
    </MainSplit>
    <StatusBar>
      <StatusItem $w={66}>2 items</StatusItem>
      <StatusItem $w={93}>1 item selected</StatusItem>
      <span>23.2 KB</span>
      <ViewSwitch $on><DetailsView /></ViewSwitch>
      <ViewSwitch><Picture /></ViewSwitch>
    </StatusBar>
  </Explorer>
)

export default function App(): ReactElement {
  return (
    <Desktop>
      <GlobalStyle />
      <BackMxrap />
      <AppsPanel />
      <ExplorerWindow />
    </Desktop>
  )
}
